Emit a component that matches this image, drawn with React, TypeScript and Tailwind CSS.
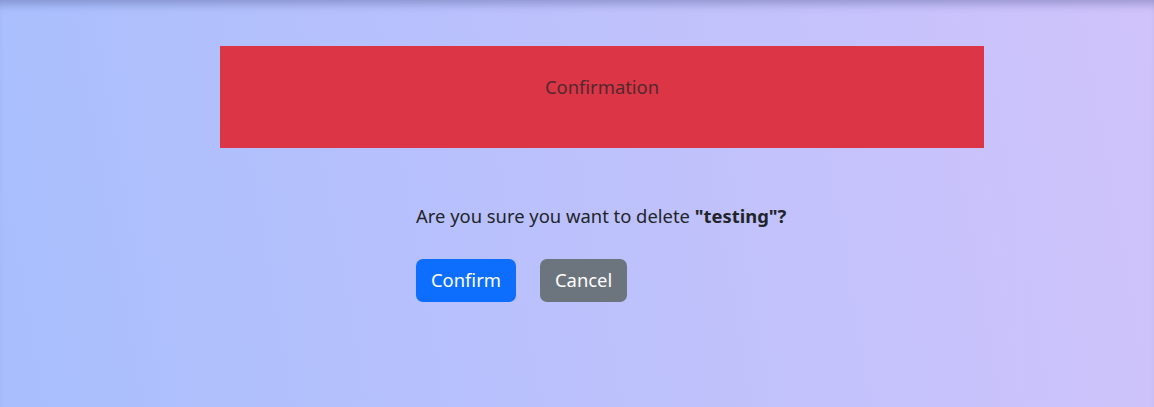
export default function App() {
  return (
    <div
      className="w-full h-[407px] overflow-hidden bg-[linear-gradient(80deg,#a8bffd,#d0c3fb)] shadow-[inset_0_10px_10px_-6px_rgba(40,50,110,0.32)] text-[#212529]"
      style={{ fontFamily: '"Noto Sans", sans-serif' }}
    >
      <div className="flex justify-center pl-[50px] pt-[46px]">
        <div className="w-[764px] flex flex-col">
          {/* Header */}
          <div className="h-[102px] bg-[#dc3545] pt-[27px] text-center text-[18.4px] leading-[27.6px] text-[#50292f]">
            Confirmation
          </div>

          {/* Body */}
          <div className="ml-[196px] w-fit mt-[54px]">
            <p className="text-[18.4px] leading-[27.6px]">
              Are you sure you want to delete <b className="font-bold">"testing"?</b>
            </p>
            <div className="flex gap-[24px] mt-[29px]">
              <button className="h-[43px] px-[15px] rounded-[7px] bg-[#0d6efd] text-white text-[18.4px] leading-[27.6px]">
                Confirm
              </button>
              <button className="h-[43px] px-[15px] rounded-[7px] bg-[#6c757d] text-white text-[18.4px] leading-[27.6px]">
                Cancel
              </button>
            </div>
          </div>
        </div>
      </div>
    </div>
  );
}
